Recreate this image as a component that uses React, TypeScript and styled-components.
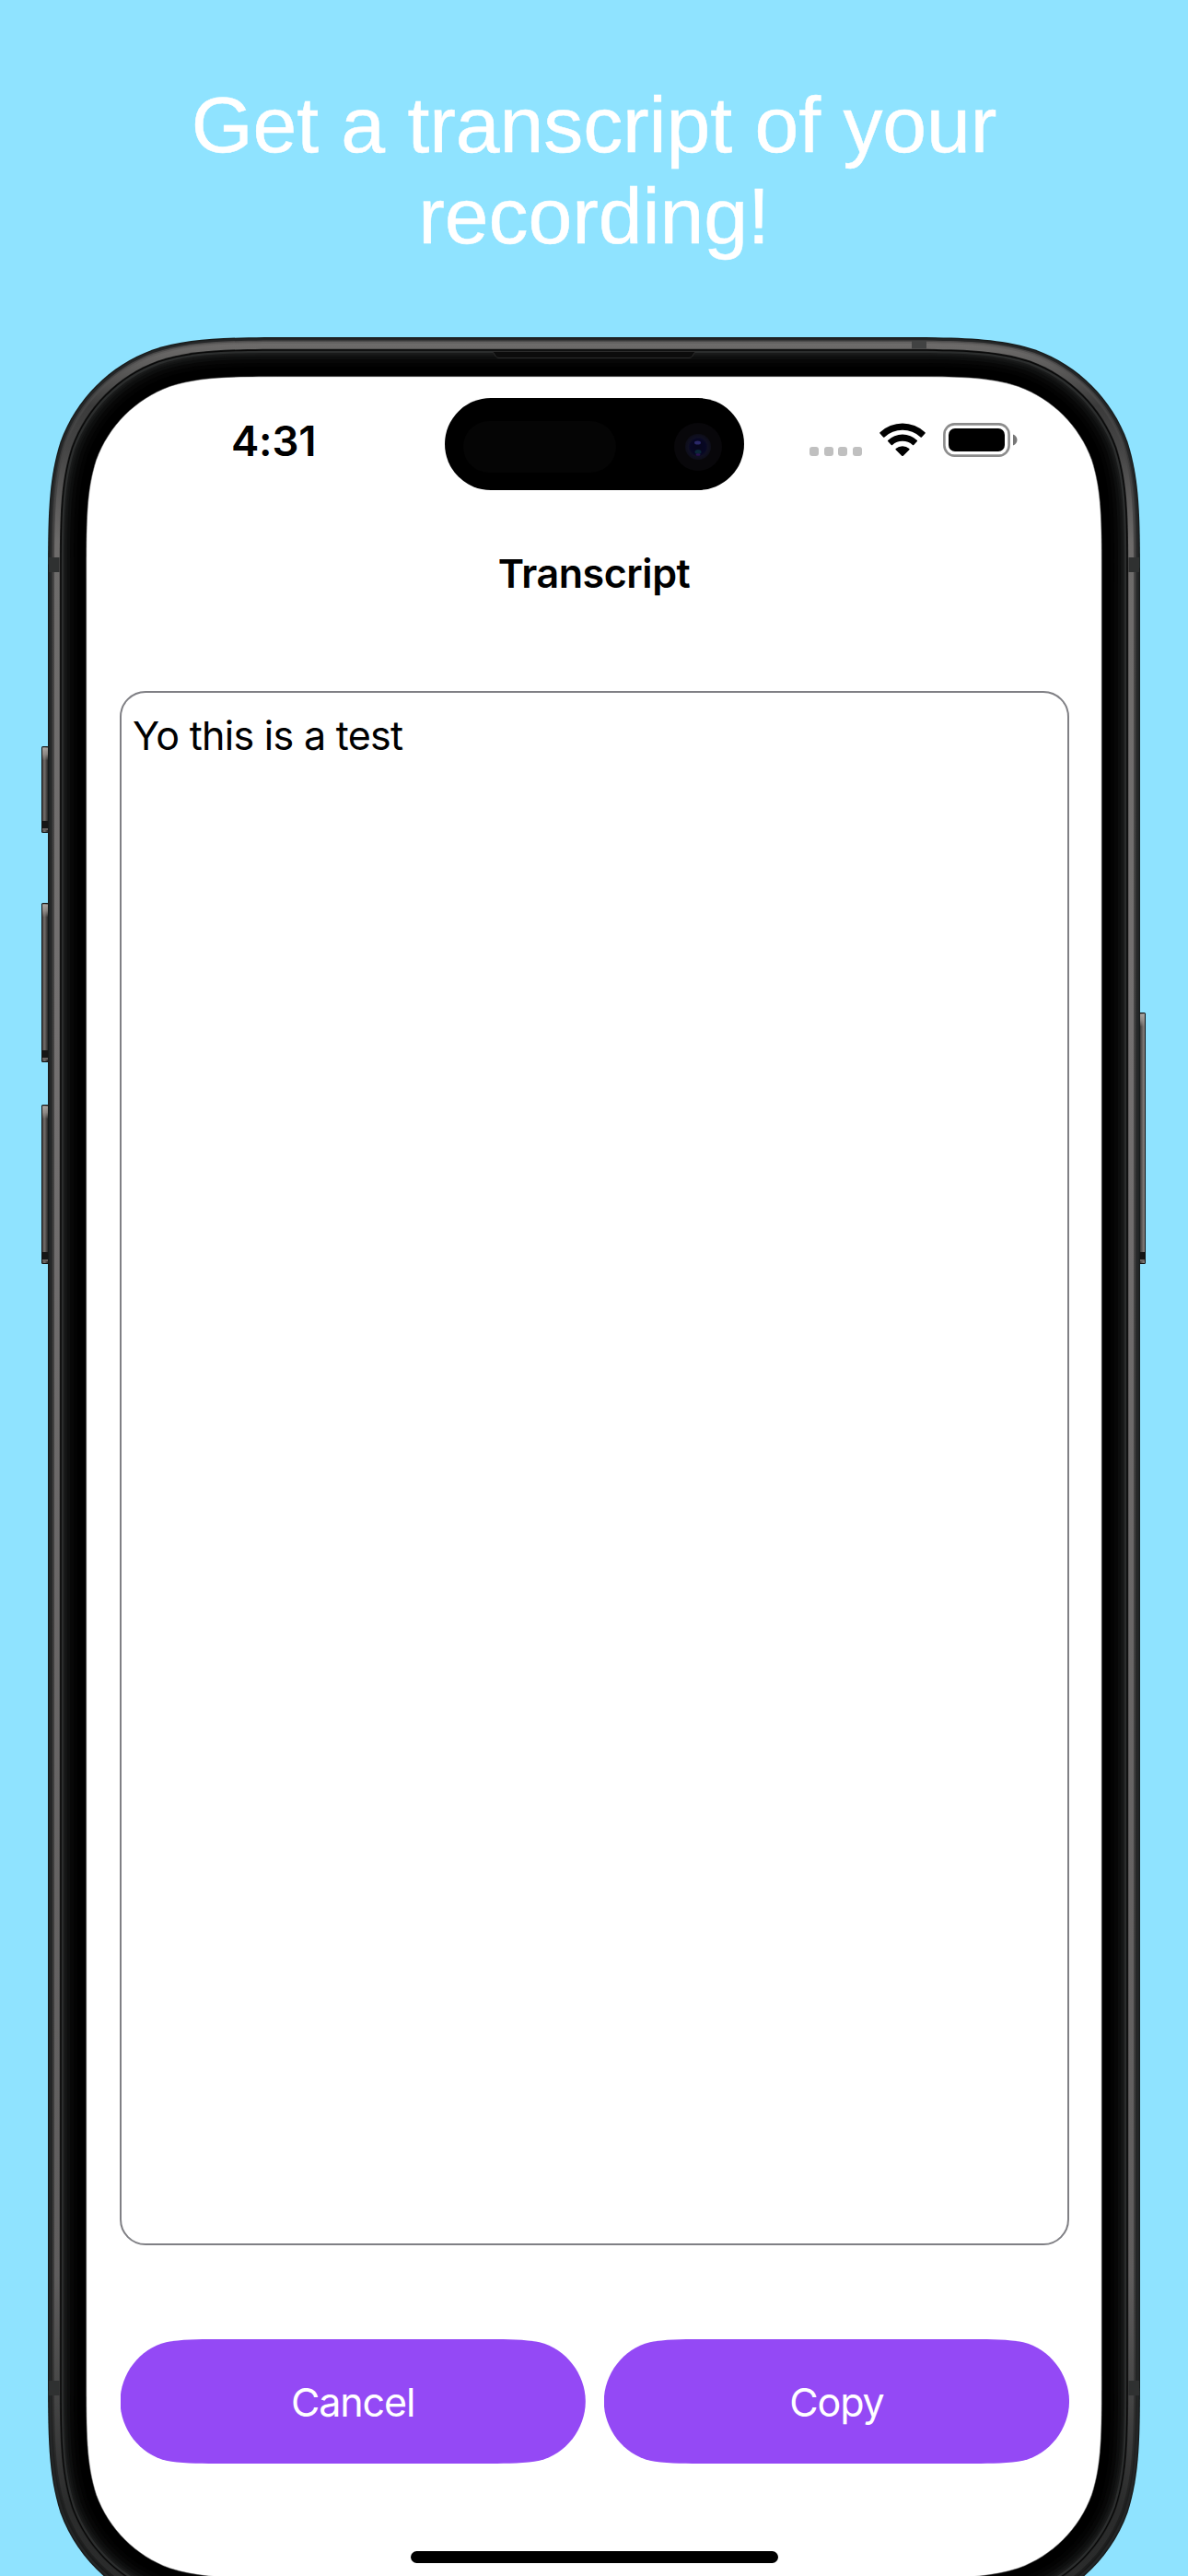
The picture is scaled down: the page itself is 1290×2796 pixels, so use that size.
import React from "react";
import styled, { createGlobalStyle } from "styled-components";

const SKY = "#8fe3ff";
const PURPLE = "#9449f5";

const GlobalStyle = createGlobalStyle`
  *, *::before, *::after { box-sizing: border-box; }
  body { margin: 0; background: ${SKY}; }
`;

/* Rounded rectangle with continuous ("squircle") corners. */
function smoothRect(x: number, y: number, w: number, h: number, r: number): string {
  const a = 1.528665 * r;
  const b = 1.088493 * r;
  const c = 0.868407 * r;
  const d = 0.631494 * r;
  const e = 0.074911 * r;
  const f = 0.372824 * r;
  const g = 0.16906 * r;
  const R = x + w;
  const B = y + h;
  return [
    `M${x + a} ${y}H${R - a}`,
    `C${R - b} ${y} ${R - c} ${y} ${R - d} ${y + e}`,
    `C${R - f} ${y + g} ${R - g} ${y + f} ${R - e} ${y + d}`,
    `C${R} ${y + c} ${R} ${y + b} ${R} ${y + a}`,
    `V${B - a}`,
    `C${R} ${B - b} ${R} ${B - c} ${R - e} ${B - d}`,
    `C${R - g} ${B - f} ${R - f} ${B - g} ${R - d} ${B - e}`,
    `C${R - c} ${B} ${R - b} ${B} ${R - a} ${B}`,
    `H${x + a}`,
    `C${x + b} ${B} ${x + c} ${B} ${x + d} ${B - e}`,
    `C${x + f} ${B - g} ${x + g} ${B - f} ${x + e} ${B - d}`,
    `C${x} ${B - c} ${x} ${B - b} ${x} ${B - a}`,
    `V${y + a}`,
    `C${x} ${y + b} ${x} ${y + c} ${x + e} ${y + d}`,
    `C${x + g} ${y + f} ${x + f} ${y + g} ${x + d} ${y + e}`,
    `C${x + c} ${y} ${x + b} ${y} ${x + a} ${y}Z`,
  ].join("");
}

const Page = styled.main`
  width: 1290px;
  height: 2796px;
  overflow: hidden;
  background: ${SKY};
  display: flex;
  flex-direction: column;
  align-items: center;
`;

const Headline = styled.h1`
  margin: 0;
  height: 366px;
  flex: none;
  padding-top: 86px;
  font: 400 86px/99px "Liberation Sans", Arial, sans-serif;
  letter-spacing: -0.1px;
  word-spacing: 0.6px;
  text-align: center;
  color: #fff;
  -webkit-text-stroke: 0.5px #fff;
`;

const Device = styled.section`
  position: relative;
  flex: none;
  width: 1186px;
  height: 2475px;
  padding: 43px 42px;
`;

const Hardware = styled.svg`
  position: absolute;
  inset: 0;
  width: 1186px;
  height: 2475px;
  overflow: visible;
`;

const Screen = styled.div`
  position: relative;
  width: 1102px;
  height: 2389px;
  display: flex;
  flex-direction: column;
  font-family: Inter, "Noto Sans", sans-serif;
  color: #000;
`;

const StatusBar = styled.header`
  height: 146px;
  flex: none;
  display: grid;
  grid-template-columns: 389px 325px 388px;
`;

const Clock = styled.time`
  padding: 43px 0 0 157px;
  font-size: 45.5px;
  line-height: 54px;
  font-weight: 600;
  letter-spacing: -0.2px;
`;

const Island = styled.svg`
  margin-top: 23px;
  width: 325px;
  height: 100px;
`;

const StatusIcons = styled.div`
  display: flex;
  padding: 50px 0 0 71px;
`;

const SignalDots = styled.div`
  display: flex;
  gap: 5.6px;
  margin: 26px 19px 0 0;
`;

const Dot = styled.span`
  width: 10px;
  height: 10px;
  border-radius: 3px;
  background: #c0c0c0;
`;

const NavTitle = styled.h2`
  margin: 40px 0 0;
  height: 54px;
  flex: none;
  font-size: 43px;
  line-height: 54px;
  font-weight: 600;
  letter-spacing: -0.45px;
  text-align: center;
`;

const TranscriptBox = styled.div`
  margin: 101px 35px 0 36px;
  height: 1687px;
  flex: none;
  border: 2.5px solid #808085;
  border-radius: 28px;
  padding: 19px 12px;
  font-size: 43px;
  line-height: 54px;
  letter-spacing: -0.7px;
`;

const Actions = styled.footer`
  margin: 102px 35px 0 36.5px;
  display: flex;
  gap: 20px;
`;

const ActionButton = styled.button`
  flex: 1;
  height: 135px;
  border: 0;
  padding: 0;
  background: ${PURPLE};
  color: #fff;
  font: 400 43px/54px Inter, "Noto Sans", sans-serif;
  letter-spacing: -1.15px;
  clip-path: path("M0 67.5C0 38 21 10 50 3.2C64 .3 85 0 103 0H402.3C420 0 441 .3 455.3 3.2C484 10 505.3 38 505.3 67.5C505.3 97 484 125 455.3 131.8C441 134.7 420 135 402.3 135H103C85 135 64 134.7 50 131.8C21 125 0 97 0 67.5Z");
`;

const HomeIndicator = styled.div`
  margin: 95px auto 0;
  width: 399px;
  height: 13px;
  border-radius: 7px;
  background: #000;
`;

/* Bands of the metal frame, from the outside edge inward. */
const BANDS: { inset: number; fill: string }[] = [
  { inset: 0, fill: "#171b1b" },
  { inset: 1.2, fill: "#242627" },
  { inset: 3.5, fill: "url(#metalDark)" },
  { inset: 5, fill: "url(#metalMid)" },
  { inset: 7, fill: "url(#metal)" },
  { inset: 12.8, fill: "#1c1d1d" },
  { inset: 13.5, fill: "#080808" },
  { inset: 14.7, fill: "#2b2d2d" },
  { inset: 17, fill: "#191a1a" },
  { inset: 19, fill: "#131414" },
  { inset: 21, fill: "#0d0e0e" },
  { inset: 24, fill: "#070707" },
  { inset: 28, fill: "#030303" },
  { inset: 32, fill: "#000" },
];

function SideButton({ x, y, height, flip }: { x: number; y: number; height: number; flip?: boolean }) {
  return (
    <g transform={`translate(${x} ${y})${flip ? " scale(-1 1)" : ""}`}>
      <rect width="8" height={height} rx="1.5" fill="#111" />
      <rect x="1" y="1" width="6" height={height - 2} fill={flip ? "url(#keyRight)" : "url(#key)"} />
      <rect x="1" y="1.5" width="6" height="14" fill="url(#keyTop)" />
      <rect x="1" y={height - 13} width="6" height="8" fill="#161616" />
      <rect x="1" y={height - 5} width="6" height="2" fill="#696361" />
    </g>
  );
}

function DeviceBody() {
  return (
    <Hardware viewBox="0 0 1186 2475" aria-hidden="true">
      <defs>
        <linearGradient id="metal" gradientUnits="userSpaceOnUse" x1="0" y1="0" x2="0" y2="2475">
          <stop offset="0" stopColor="#72706f" />
          <stop offset=".012" stopColor="#5f5e5d" />
          <stop offset=".03" stopColor="#3b3b3b" />
          <stop offset=".05" stopColor="#464646" />
          <stop offset=".09" stopColor="#6d6b6a" />
          <stop offset=".3" stopColor="#737070" />
          <stop offset=".85" stopColor="#5f5d5d" />
          <stop offset=".9" stopColor="#474747" />
          <stop offset=".95" stopColor="#2b2c2c" />
          <stop offset="1" stopColor="#2a2b2b" />
        </linearGradient>
        <linearGradient id="metalMid" gradientUnits="userSpaceOnUse" x1="0" y1="0" x2="0" y2="2475">
          <stop offset="0" stopColor="#666463" />
          <stop offset=".03" stopColor="#454545" />
          <stop offset=".1" stopColor="#464545" />
          <stop offset=".88" stopColor="#3c3c3c" />
          <stop offset=".95" stopColor="#202121" />
          <stop offset="1" stopColor="#1b1c1c" />
        </linearGradient>
        <linearGradient id="metalDark" gradientUnits="userSpaceOnUse" x1="0" y1="0" x2="0" y2="2475">
          <stop offset="0" stopColor="#4d4c4c" />
          <stop offset=".03" stopColor="#3c3c3c" />
          <stop offset=".1" stopColor="#303131" />
          <stop offset=".9" stopColor="#232424" />
          <stop offset="1" stopColor="#151616" />
        </linearGradient>
        <linearGradient id="key">
          <stop offset="0" stopColor="#4b4846" />
          <stop offset=".4" stopColor="#6f6a67" />
          <stop offset="1" stopColor="#2a2928" />
        </linearGradient>
        <linearGradient id="keyRight">
          <stop offset="0" stopColor="#8b8582" />
          <stop offset=".4" stopColor="#6a6562" />
          <stop offset="1" stopColor="#282727" />
        </linearGradient>
        <linearGradient id="keyTop" x1="0" y1="0" x2="0" y2="1">
          <stop offset="0" stopColor="#a8a4a0" />
          <stop offset=".5" stopColor="#9a9591" stopOpacity=".8" />
          <stop offset="1" stopColor="#9a9591" stopOpacity="0" />
        </linearGradient>
      </defs>
      <SideButton x={-7} y={444} height={94} />
      <SideButton x={-7} y={614} height={173} />
      <SideButton x={-7} y={833} height={173} />
      <SideButton x={1192} y={733} height={273} flip />
      {BANDS.map(({ inset, fill }) => (
        <path
          key={inset}
          d={smoothRect(inset, inset, 1186 - 2 * inset, 2475 - 2 * inset, 180 - inset * 0.87)}
          fill={fill}
        />
      ))}
      <g fill="#2f3131">
        <rect x="1" y="239" width="11.5" height="16" />
        <rect x="1173.5" y="239" width="11.5" height="16" />
        <rect x="1" y="2218" width="11.5" height="16" />
        <rect x="1173.5" y="2218" width="11.5" height="16" />
        <rect x="938" y="4" width="16" height="8.5" fill="#414242" />
      </g>
      <path d="M483 15.5L486.5 21Q487.500 22.500 490 22.500H696Q698.500 22.500 699.500 21L703 15.500Z" fill="#0c0c0c" stroke="#2b2b2b" strokeWidth="1" />
      <path d={smoothRect(41.7, 42.7, 1102.6, 2389.6, 143.5)} fill="#fff" stroke="#555" strokeWidth=".5" />
    </Hardware>
  );
}

function DynamicIsland() {
  return (
    <Island viewBox="0 0 325 100" aria-hidden="true">
      <defs>
        <radialGradient id="lens">
          <stop offset="0" stopColor="#07071c" />
          <stop offset=".6" stopColor="#070724" />
          <stop offset=".75" stopColor="#101022" />
          <stop offset="1" stopColor="#0d0d18" />
        </radialGradient>
      </defs>
      <rect width="325" height="100" rx="50" />
      <rect x="20" y="25" width="166" height="56" rx="28" fill="#050505" />
      <circle cx="275" cy="53" r="26" fill="#08070a" />
      <circle cx="275" cy="53" r="14" fill="url(#lens)" />
      <ellipse cx="274.500" cy="48.500" rx="3.500" ry="2" fill="#2a2868" />
      <ellipse cx="275" cy="58.500" rx="3.500" ry="2.500" fill="#0a2636" />
      <ellipse cx="275" cy="61.500" rx="2.500" ry="1.200" fill="#2c1050" />
    </Island>
  );
}

function WifiIcon() {
  return (
    <svg width="50" height="37" viewBox="0 0 50 37" aria-label="Wi-Fi">
      <path d="M.5 10.300A35.500 35.500 0 0 1 49.500 10.300Q50 10.900 49.500 11.500L45.900 15.400Q45.200 16 44.600 15.400A29 29 0 0 0 5.400 15.400Q4.800 16 4.100 15.400L.5 11.500Q0 10.900.5 10.300Z" />
      <path d="M9.100 18.900A23 23 0 0 1 40.900 18.900Q41.400 19.500 40.900 20.100L37.200 24Q36.600 24.600 36 24A16.500 16.500 0 0 0 14 24Q13.400 24.600 12.800 24L9.100 20.100Q8.600 19.500 9.100 18.900Z" />
      <path d="M17.600 28A11 11 0 0 1 32.400 28Q32.900 28.600 32.300 29.200L25.800 35.700Q25 36.500 24.200 35.700L17.700 29.200Q17.100 28.600 17.600 28Z" />
    </svg>
  );
}

const Battery = styled.svg`
  margin-left: 19px;
`;

function BatteryIcon() {
  return (
    <Battery width="82" height="38" viewBox="0 0 82 38" aria-label="Battery">
      <rect x="1.400" y="1.400" width="70.200" height="34.200" rx="11" fill="none" stroke="#8c8c8c" strokeWidth="2.600" />
      <rect x="6" y="6" width="61" height="25" rx="7" />
      <path d="M76 12.500C82 14.500 82 22.500 76 24.500Z" fill="#777" />
    </Battery>
  );
}

export default function App() {
  return (
    <>
      <GlobalStyle />
      <Page>
        <Headline>
          Get a transcript of your
          <br />
          recording!
        </Headline>
        <Device>
          <DeviceBody />
          <Screen>
            <StatusBar>
              <Clock>4:31</Clock>
              <DynamicIsland />
              <StatusIcons>
                <SignalDots>
                  <Dot />
                  <Dot />
                  <Dot />
                  <Dot />
                </SignalDots>
                <WifiIcon />
                <BatteryIcon />
              </StatusIcons>
            </StatusBar>
            <NavTitle>Transcript</NavTitle>
            <TranscriptBox>Yo this is a test</TranscriptBox>
            <Actions>
              <ActionButton type="button">Cancel</ActionButton>
              <ActionButton type="button">Copy</ActionButton>
            </Actions>
            <HomeIndicator />
          </Screen>
        </Device>
      </Page>
    </>
  );
}
